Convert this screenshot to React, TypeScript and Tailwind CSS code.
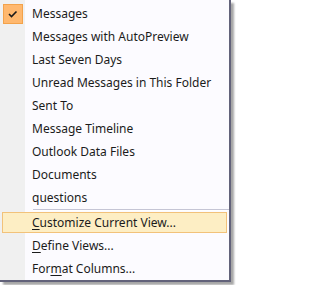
import React from 'react';

const Row = ({
  children,
  checked = false,
  active = false,
}: {
  children: React.ReactNode;
  checked?: boolean;
  active?: boolean;
}) => (
  <div className="h-[23px] px-[2px] flex items-center">
    <div
      className={`h-[21px] w-full flex items-center ${
        active ? 'bg-[#fdeec4] border border-[#f2c27a]' : 'border border-transparent'
      }`}
    >
      <div className="w-[29px] h-full flex items-center">
        {checked && (
          <div className="ml-[0px] w-[20px] h-[20px] bg-[#ffb86e] border border-[#f3a24a] flex items-center justify-center">
            <svg width="10" height="8" viewBox="0 0 10 8">
              <path d="M1 4 L3.5 6.5 L8.5 1.5" fill="none" stroke="#1a1a1a" strokeWidth="1.6" />
            </svg>
          </div>
        )}
      </div>
      <span className="text-[12px] text-[#1b1b1b] leading-none whitespace-nowrap">{children}</span>
    </div>
  </div>
);

const App = () => {
  return (
    <div className="w-[234px] h-[285px] bg-white" style={{ fontFamily: '"Noto Sans", "Open Sans", sans-serif' }}>
      <div className="w-[231px] h-[282px] border-r-2 border-b-2 border-[#62627a] shadow-[3px_3px_2px_rgba(0,0,0,0.35)] bg-[linear-gradient(to_right,#f0f0f0_25px,#fcfbff_25px)] pt-[2px]">
        <Row checked>Messages</Row>
        <Row>Messages with AutoPreview</Row>
        <Row>Last Seven Days</Row>
        <Row>Unread Messages in This Folder</Row>
        <Row>Sent To</Row>
        <Row>Message Timeline</Row>
        <Row>Outlook Data Files</Row>
        <Row>Documents</Row>
        <Row>questions</Row>
        <div className="h-[2px] ml-[33px]">
          <div className="h-px bg-[#c5c5d5]" />
          <div className="h-px bg-white" />
        </div>
        <Row active>
          <span className="underline underline-offset-2">C</span>ustomize Current View...
        </Row>
        <Row>
          <span className="underline underline-offset-2">D</span>efine Views...
        </Row>
        <Row>
          For<span className="underline underline-offset-2">m</span>at Columns...
        </Row>
      </div>
    </div>
  );
};

export default App;
